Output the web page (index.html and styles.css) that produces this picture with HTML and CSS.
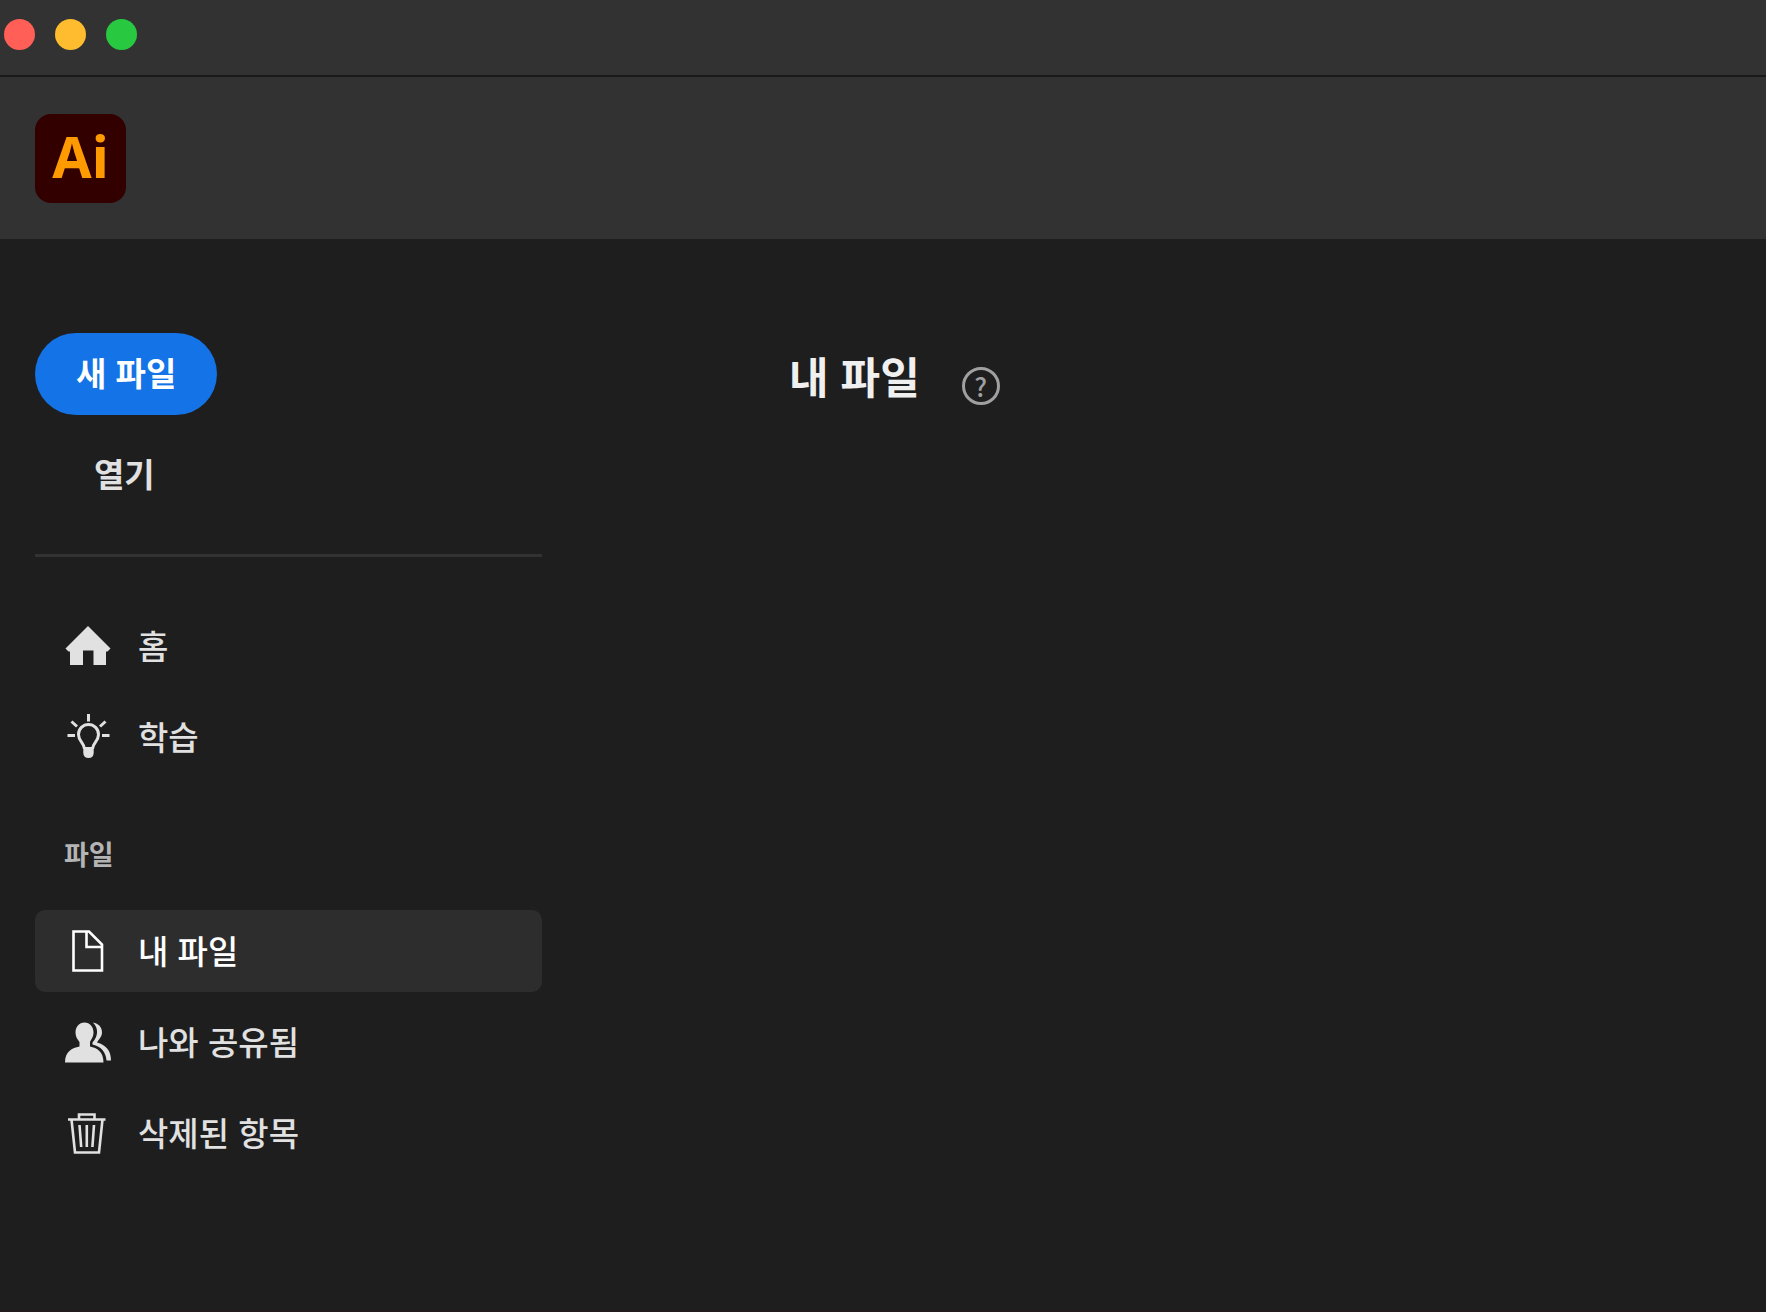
FILE: index.html
```html
<!DOCTYPE html>
<html lang="ko">

<head>
    <meta charset="UTF-8">
    <meta name="viewport" content="width=device-width, initial-scale=1.0">
    <title>내 파일</title>
    <link rel="stylesheet" href="styles.css">
</head>

<body>

    <div class="titlebar">
        <button class="dot close" aria-label="닫기"></button>
        <button class="dot minimize" aria-label="최소화"></button>
        <button class="dot maximize" aria-label="최대화"></button>
    </div>

    <header class="app-header">
        <div class="logo">Ai</div>
    </header>

    <div class="layout">
        <aside class="sidebar">
            <div class="actions">
                <button class="btn-new">새 파일</button>
                <button class="btn-open">열기</button>
            </div>

            <nav class="nav">
                <a href="#" class="nav-item">
                    <svg class="icon" viewBox="0 0 48 48">
                        <path fill="currentColor" d="M24 4 46.500 26.500 43.500 29.500H42V43H29.500V28.500H19V43H6V29.500H4.500L1.500 26.500Z" />
                    </svg>
                    <span>홈</span>
                </a>
                <a href="#" class="nav-item">
                    <svg class="icon" viewBox="0 0 48 48" fill="none" stroke="currentColor" stroke-width="3">
                        <path d="M24.5 1V8.5M3.5 22.5H11M38 22.5H45.500M7.500 8.500 13 13.500M41.500 8.500 36 13.500" />
                        <path d="M20.5 36C20.5 30 14.5 28.5 14.5 21.5A10 10 0 0 1 34.5 21.5C34.5 28.5 28.5 30 28.5 36" />
                        <path fill="currentColor" stroke="none" d="M19.300 34H29.700V40Q29.500 45 24.500 45 19.500 45 19.300 40Z" />
                    </svg>
                    <span>학습</span>
                </a>
            </nav>

            <h2 class="nav-title">파일</h2>

            <nav class="nav">
                <a href="#" class="nav-item active">
                    <svg class="icon" viewBox="0 0 48 48" fill="none" stroke="currentColor" stroke-width="2.600">
                        <path d="M9.5 4.5H25L38 17.5V43.5H9.5Z" />
                        <path d="M22.5 4.5V20H38" />
                    </svg>
                    <span>내 파일</span>
                </a>
                <a href="#" class="nav-item">
                    <svg class="icon" viewBox="0 0 48 48" fill="currentColor">
                        <path d="M20.5 4.5C26 4.5 29.5 9 29.5 14.5 29.5 19 27 21.5 26 24V28.5C33 30 39.5 33.5 39.5 44.5H1C1 33.5 8 30 15.5 28.5V24C13.5 21.5 11.5 19 11.5 14.5 11.5 9 15 4.5 20.5 4.5Z" />
                        <path d="M29 4.5C34.5 5.5 38 9 38 14.5 38 19 34.5 21.5 33 24.5 42 27 47 32.5 47 42.5H42.5C42 34.5 37.5 28.5 28.5 26.5V24.5C34.5 18 34.5 10 29 4.5Z" />
                    </svg>
                    <span>나와 공유됨</span>
                </a>
                <a href="#" class="nav-item">
                    <svg class="icon" viewBox="0 0 48 48" fill="none" stroke="currentColor" stroke-width="2.600">
                        <path d="M4 10.5H41.5M15 10V5.5H30.5V10M7.500 10.500 11 43.500H35L38.500 10.500" />
                        <path d="M15.500 16 17.200 38M22.800 16V38M30 16 28.400 38" />
                    </svg>
                    <span>삭제된 항목</span>
                </a>
            </nav>
        </aside>

        <main class="content">
            <h1>내 파일</h1>
            <button class="help" aria-label="도움말">?</button>
        </main>
    </div>

</body>

</html>
```
FILE: styles.css
```css
* {
    box-sizing: border-box;
}

body {
    display: flex;
    flex-direction: column;
    min-height: 100vh;
    margin: 0;
    background-color: #1e1e1e;
    border-bottom: 1px solid #231c20;
    color: #e1e1e1;
    font-family: "Noto Sans CJK KR", sans-serif;
    font-size: 33px;
    line-height: 48px;
}

button {
    padding: 0;
    border: none;
    background: none;
    color: inherit;
    font: inherit;
    cursor: pointer;
}

/* Window bar */
.titlebar {
    display: flex;
    gap: 20px;
    height: 77px;
    padding: 19px 4px;
    background-color: #323232;
    border-bottom: 2px solid #191919;
}

.dot {
    width: 31px;
    height: 31px;
    border-radius: 50%;
}

.close {
    background-color: #ff5f57;
}

.minimize {
    background-color: #febc2e;
}

.maximize {
    background-color: #28c840;
}

.app-header {
    padding: 37px 35px 36px;
    background-color: #323232;
}

.logo {
    width: 91px;
    height: 89px;
    border-radius: 16px;
    background-color: #330000;
    color: #ff9a00;
    font-family: "Noto Sans", sans-serif;
    font-size: 57px;
    font-weight: bold;
    line-height: 84px;
    text-align: center;
}

.layout {
    display: flex;
    flex: 1;
}

/* Sidebar */
.sidebar {
    width: 577px;
    padding: 94px 35px;
}

.actions {
    display: flex;
    flex-direction: column;
    align-items: flex-start;
    gap: 34px;
    padding-bottom: 57px;
    border-bottom: 3px solid #323232;
    margin-bottom: 48px;
    font-weight: bold;
}

.btn-new {
    height: 82px;
    padding: 0 41px 4px;
    border-radius: 41px;
    background-color: #1473e6;
    color: #fff;
}

.btn-open {
    padding: 0 59px;
}

.nav {
    display: flex;
    flex-direction: column;
    gap: 9px;
}

.nav-item {
    display: flex;
    align-items: center;
    gap: 26px;
    height: 82px;
    padding: 0 29px;
    border-radius: 10px;
    color: #e1e1e1;
    font-weight: 500;
    text-decoration: none;
}

.nav-item span {
    padding-bottom: 2px;
}

.nav-item.active {
    background-color: #2d2d2d;
    color: #fff;
}

.icon {
    width: 48px;
    height: 48px;
}

.nav-title {
    margin: 56px 29px 36px;
    color: #b4b4b4;
    font-size: 27px;
    font-weight: bold;
    line-height: 40px;
}

/* Content */
.content {
    display: flex;
    flex: 1;
    align-items: flex-start;
    gap: 42px;
    padding: 106px 212px;
}

h1 {
    margin: 0;
    color: #f0f0f0;
    font-size: 43px;
    line-height: 60px;
}

.help {
    width: 38px;
    height: 38px;
    margin-top: 22px;
    border: 3px solid #a0a0a0;
    border-radius: 50%;
    color: #a0a0a0;
    font-size: 26px;
    font-weight: 500;
    line-height: 30px;
}
```
